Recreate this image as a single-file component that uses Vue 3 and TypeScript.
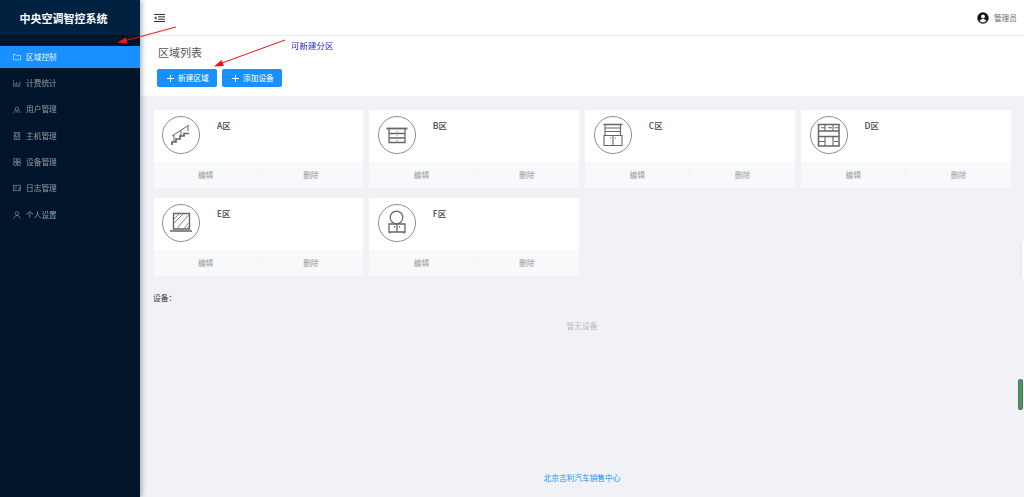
<script setup lang="ts">
interface MenuItem {
  key: string
  label: string
}

const menus: MenuItem[] = [
  { key: 'folder', label: '区域控制' },
  { key: 'chart', label: '计费统计' },
  { key: 'users', label: '用户管理' },
  { key: 'host', label: '主机管理' },
  { key: 'device', label: '设备管理' },
  { key: 'log', label: '日志管理' },
  { key: 'user', label: '个人设置' }
]

const areas = ['A', 'B', 'C', 'D', 'E', 'F']
</script>

<template>
  <div class="layout">
    <aside class="sider">
      <div class="logo">中央空调智控系统</div>
      <ul class="menu">
        <li v-for="(m, i) in menus" :key="m.key" class="menu-item" :class="{ active: i === 0 }">
          <svg class="menu-icon" viewBox="0 0 10 10" fill="none" stroke="currentColor" stroke-width="0.8">
            <path v-if="m.key === 'folder'" d="M.5 2h3l1 1h5v5.500h-9z" />
            <path v-else-if="m.key === 'chart'" d="M.5 1v8h9M2.500 8V5M4.500 8V3.500M6.500 8V5.500M8.500 8V3" />
            <g v-else-if="m.key === 'users'">
              <circle cx="5" cy="3.500" r="2.300" />
              <path d="M.8 9c.3-2 1.500-3.300 2.700-3.600M9.200 9C8.900 7 7.700 5.700 6.500 5.400M3.500 8l1.500-1 1.500 1" />
            </g>
            <g v-else-if="m.key === 'host'">
              <rect x="1.500" y=".5" width="7" height="9" />
              <path d="M3 7.500h4M3 2.500h4v3H3z" />
            </g>
            <g v-else-if="m.key === 'device'">
              <rect x="1" y="1" width="3.400" height="3.400" />
              <rect x="5.600" y="1" width="3.400" height="3.400" />
              <rect x="1" y="5.600" width="3.400" height="3.400" />
              <rect x="5.600" y="5.600" width="3.400" height="3.400" />
            </g>
            <g v-else-if="m.key === 'log'">
              <rect x=".5" y="1.500" width="9" height="7" />
              <path d="M2 4h3M2 6.500h2M6.500 6.500h1.500V4" />
            </g>
            <g v-else>
              <circle cx="5" cy="3" r="2.200" />
              <path d="M1 9.500c.3-2.500 2-3.800 4-3.800s3.700 1.300 4 3.800" />
            </g>
          </svg>
          <span class="menu-label">{{ m.label }}</span>
        </li>
      </ul>
    </aside>

    <main class="main">
      <header class="topbar">
        <svg class="fold" viewBox="0 0 11 8" fill="none" stroke="#333" stroke-width="1">
          <path d="M0 .5h11M4 2.800h7M4 5.200h7M0 7.500h11" />
          <path d="M2.500 2.300v3.400L0 4z" fill="#333" stroke="none" />
        </svg>
        <div class="account">
          <svg class="avatar" viewBox="0 0 12 12">
            <circle cx="6" cy="6" r="5.700" fill="#111" />
            <circle cx="6" cy="4.500" r="1.900" fill="#fff" />
            <path d="M2.600 9c.6-1.500 2-2 3.400-2s2.800.5 3.400 2c-.9.9-2.100 1.400-3.400 1.400S3.500 9.900 2.600 9z" fill="#fff" />
          </svg>
          <span>管理员</span>
        </div>
      </header>

      <section class="page-head">
        <h1>区域列表</h1>
        <div class="actions">
          <button class="btn">
            <svg class="plus" viewBox="0 0 7 7" stroke="#fff" stroke-width="1.100"><path d="M3.500 0v7M0 3.500h7" /></svg>
            新建区域
          </button>
          <button class="btn">
            <svg class="plus" viewBox="0 0 7 7" stroke="#fff" stroke-width="1.100"><path d="M3.500 0v7M0 3.500h7" /></svg>
            添加设备
          </button>
        </div>
      </section>

      <section class="content">
        <div class="grid">
          <div v-for="a in areas" :key="a" class="card">
            <div class="card-body">
              <svg class="area-icon" viewBox="0 0 38 38" fill="none" stroke="#666" stroke-width="1.100">
                <circle cx="19" cy="19" r="18.500" stroke="#8c8c8c" stroke-width="1" />
                <g v-if="a === 'A'">
                  <path d="M10 20L27 9M12 19v7M19 14.500v6M26 10v5" stroke-width="1" />
                  <path d="M10 29v-3h4v-3h4v-3h4v-2.500h5" stroke-width="1.700" />
                </g>
                <g v-else-if="a === 'B'">
                  <path d="M8.500 12.500h21" stroke-width="1.800" />
                  <path d="M11 13v13.500h16V13M11 17.500h16M11 22h16" stroke-width="1.300" />
                  <path d="M19 15v.8M19 19.500v.8M19 24v.8" />
                </g>
                <g v-else-if="a === 'C'">
                  <path d="M9.500 8.500h19" stroke-width="1.500" />
                  <path d="M11 9v10M26.500 9v10M11 12h15.500M11 15.500h15.500" />
                  <path d="M10 19.500h18v10H10zM19 19.500v10M16.500 21.500v1M21.500 21.500v1" />
                </g>
                <g v-else-if="a === 'D'">
                  <path d="M8.500 8.500h20.500v21.500H8.500z" stroke-width="1.500" />
                  <path d="M8.500 15h20.500M8.500 20.500h20.500" stroke-width="1.500" />
                  <path d="M11 11.800h4M18 11.800h4M24.500 11.800h4M15 9v6M23 9v6M9 25.500h6M15 21v9M23 21v9M24 25.500h4" stroke-width="1.100" />
                </g>
                <g v-else-if="a === 'E'">
                  <path d="M11.500 9.500h16v15.500h-16z" stroke-width="1.400" />
                  <path d="M8 27h22" stroke-width="1.500" />
                  <path d="M12 15l5-5M12 19l9-9M15 24.500l12-14" stroke-width="1" stroke="#888" />
                  <path d="M22 24.500l5-6M25 24.500l2-2.500" stroke-width="1" stroke="#888" />
                </g>
                <g v-else>
                  <circle cx="18.500" cy="13.500" r="6.300" stroke-width="1.200" />
                  <path d="M11 20h16v8H11zM19 20v8M12 28v1.500M26 28v1.500M16.500 22v1.500M21.500 22v1.500" stroke-width="1.300" />
                </g>
              </svg>
              <span class="area-name">{{ a }}区</span>
            </div>
            <div class="card-foot">
              <span>编辑</span>
              <span>删除</span>
            </div>
          </div>
        </div>
        <div class="device-title">设备：</div>
        <div class="empty">暂无设备</div>
        <div class="copyright">北京吉利汽车销售中心</div>
      </section>
    </main>

    <!-- red notes drawn over the screenshot -->
    <svg class="marks" viewBox="0 0 1024 497">
      <path d="M176 27L124 41" stroke="#f01414" stroke-width="1" />
      <path d="M117 42.500l9-5 1.500 6z" fill="#f01414" />
      <path d="M285 40L222 63" stroke="#f01414" stroke-width="1" />
      <path d="M214 66.500l7.500-6.500 2.500 6z" fill="#f01414" />
    </svg>
    <span class="note">可新建分区</span>
    <i class="side-tab"></i>
    <i class="side-bar"></i>
  </div>
</template>

<style>
html,
body {
  margin: 0;
  background: #f0f2f5;
}
</style>

<style scoped>
.layout {
  position: relative;
  display: flex;
  height: 497px;
  overflow: hidden;
  font-family: "Noto Sans CJK SC", "Noto Sans", sans-serif;
  color: #555;
  /* the reference is a scaled down capture, everything is a bit soft */
  filter: blur(0.35px);
}

.sider {
  flex: 0 0 140px;
  background: #001529;
  box-shadow: 2px 0 5px rgba(0, 21, 41, 0.3);
  z-index: 2;
}

.logo {
  height: 35px;
  line-height: 36px;
  padding-right: 13px;
  text-align: center;
  color: #fff;
  font-size: 11px;
  font-weight: 700;
  background: #002140;
}

.menu {
  list-style: none;
  margin: 11px 0 0;
  padding: 0;
}

.menu-item {
  display: flex;
  align-items: center;
  height: 22px;
  margin-bottom: 4.300px;
  padding-left: 13px;
  color: rgba(255, 255, 255, 0.55);
  font-size: 7.700px;
}

.menu-item.active {
  background: #1890ff;
  color: rgba(255, 255, 255, 0.9);
}

.menu-icon {
  width: 8px;
  height: 8px;
  margin-right: 5px;
}

.menu-label {
  padding-bottom: 1.500px;
}

.main {
  flex: 1;
  display: flex;
  flex-direction: column;
  min-width: 0;
}

.topbar {
  display: flex;
  align-items: center;
  justify-content: space-between;
  height: 35px;
  padding: 0 7px 0 14px;
  background: #fff;
  border-bottom: 1px solid #e8e8e8;
}

.fold {
  width: 11px;
  height: 8px;
}

.account {
  display: flex;
  align-items: center;
  gap: 5px;
  font-size: 7.700px;
  color: #666;
}

.account span {
  padding-bottom: 1px;
}

.avatar {
  width: 12px;
  height: 12px;
}

.page-head {
  height: 60px;
  padding: 8px 0 0 18px;
  box-sizing: border-box;
  background: #fff;
}

.page-head h1 {
  margin: 0;
  height: 25px;
  line-height: 16px;
  font-size: 11px;
  font-weight: 400;
  color: #555;
}

.actions {
  display: flex;
  gap: 5px;
  margin-left: -1px;
}

.btn {
  display: flex;
  align-items: center;
  width: 60px;
  height: 18px;
  padding: 0 0 1px 10px;
  box-sizing: border-box;
  border: 0;
  border-radius: 2px;
  background: #1890ff;
  color: #fff;
  font-family: inherit;
  font-size: 7.700px;
}

.plus {
  width: 7px;
  height: 7px;
  margin: 1px 4px 0 0;
}

.content {
  flex: 1;
  display: flex;
  flex-direction: column;
  padding: 14px 13.500px 0;
  background: #f0f2f5;
}

.grid {
  display: grid;
  grid-template-columns: repeat(4, 1fr);
  gap: 10px 6.400px;
}

.card {
  height: 78px;
  background: #fff;
}

.card-body {
  display: flex;
  height: 52px;
  box-sizing: border-box;
  padding: 6px 0 0 8.500px;
}

.area-icon {
  width: 38px;
  height: 38px;
}

.area-name {
  margin-left: 17px;
  line-height: 19px;
  font-size: 8.500px;
  font-weight: 500;
  color: #444;
}

.card-foot {
  display: flex;
  align-items: center;
  height: 26px;
  padding-bottom: 1.500px;
  box-sizing: border-box;
  background: #f7f9fa;
  color: #999;
  font-size: 7.700px;
}

.card-foot span {
  flex: 1;
  text-align: center;
}

.card-foot span:first-child {
  border-right: 1px solid #f0f2f5;
}

.device-title {
  margin-top: 16px;
  margin-left: -0.500px;
  font-size: 7.700px;
  line-height: 12px;
  color: #333;
}

.empty {
  margin-top: 16px;
  text-align: center;
  font-size: 7.700px;
  line-height: 12px;
  color: #bbb;
}

.copyright {
  margin-top: auto;
  padding-bottom: 13px;
  text-align: center;
  font-size: 7.700px;
  line-height: 12px;
  color: #1890ff;
}

.marks {
  position: absolute;
  inset: 0;
  width: 1024px;
  height: 497px;
  pointer-events: none;
  z-index: 3;
}

.note {
  position: absolute;
  left: 291px;
  top: 38.500px;
  font-size: 8.500px;
  line-height: 12px;
  color: #2020e0;
  z-index: 3;
}

.side-tab {
  position: absolute;
  right: 0;
  top: 241px;
  width: 2px;
  height: 38px;
  background: #fff;
  box-shadow: 0 0 2px rgba(0, 0, 0, 0.15);
}

.side-bar {
  position: absolute;
  right: 1px;
  top: 379px;
  width: 3px;
  height: 29px;
  border-radius: 2px;
  background: #3f9a60;
  border: 1px solid #666;
}
</style>
